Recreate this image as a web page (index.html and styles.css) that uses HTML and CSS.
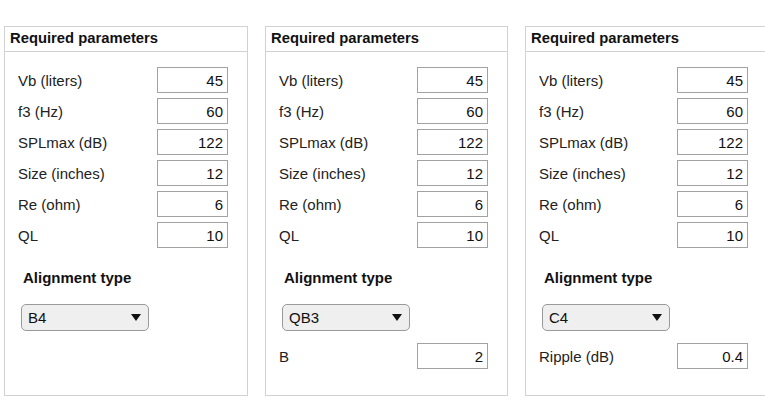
FILE: index.html
```html
<!DOCTYPE html>
<html lang="en">
<head>
    <meta charset="UTF-8">
    <meta name="viewport" content="width=device-width, initial-scale=1.0">
    <title>Box Designer</title>
    <link rel="stylesheet" href="styles.css">
</head>
<body>
    <div class="panels">
        <div class="panel">
            <div class="panel-title">Required parameters</div>
            <div class="panel-body">
                <div class="row"><span>Vb (liters)</span><input type="text" value="45"></div>
                <div class="row"><span>f3 (Hz)</span><input type="text" value="60"></div>
                <div class="row"><span>SPLmax (dB)</span><input type="text" value="122"></div>
                <div class="row"><span>Size (inches)</span><input type="text" value="12"></div>
                <div class="row"><span>Re (ohm)</span><input type="text" value="6"></div>
                <div class="row"><span>QL</span><input type="text" value="10"></div>
                <h4>Alignment type</h4>
                <div class="dropdown"><span>B4</span><span class="arrow"></span></div>
            </div>
        </div>

        <div class="panel">
            <div class="panel-title">Required parameters</div>
            <div class="panel-body">
                <div class="row"><span>Vb (liters)</span><input type="text" value="45"></div>
                <div class="row"><span>f3 (Hz)</span><input type="text" value="60"></div>
                <div class="row"><span>SPLmax (dB)</span><input type="text" value="122"></div>
                <div class="row"><span>Size (inches)</span><input type="text" value="12"></div>
                <div class="row"><span>Re (ohm)</span><input type="text" value="6"></div>
                <div class="row"><span>QL</span><input type="text" value="10"></div>
                <h4>Alignment type</h4>
                <div class="dropdown"><span>QB3</span><span class="arrow"></span></div>
                <div class="row extra"><span>B</span><input type="text" value="2"></div>
            </div>
        </div>

        <div class="panel">
            <div class="panel-title">Required parameters</div>
            <div class="panel-body">
                <div class="row"><span>Vb (liters)</span><input type="text" value="45"></div>
                <div class="row"><span>f3 (Hz)</span><input type="text" value="60"></div>
                <div class="row"><span>SPLmax (dB)</span><input type="text" value="122"></div>
                <div class="row"><span>Size (inches)</span><input type="text" value="12"></div>
                <div class="row"><span>Re (ohm)</span><input type="text" value="6"></div>
                <div class="row"><span>QL</span><input type="text" value="10"></div>
                <h4>Alignment type</h4>
                <div class="dropdown"><span>C4</span><span class="arrow"></span></div>
                <div class="row extra"><span>Ripple (dB)</span><input type="text" value="0.4"></div>
            </div>
        </div>
    </div>
</body>
</html>
```

FILE: styles.css
```css
* {
    padding: 0;
    margin: 0;
    box-sizing: border-box;
    font-family: "Liberation Sans", Arial, sans-serif;
}
body {
    background: white;
    color: #222;
    overflow: hidden;
}
.panels {
    display: flex;
    gap: 17px;
    padding: 26px 0 0 4px;
    width: 800px;
}
.panel {
    flex: none;
    width: 243px;
    height: 370px;
    border: 1px solid #d2d2d2;
}
.panel:first-child {
    width: 244px;
}
.panel-title {
    height: 25px;
    line-height: 23px;
    padding-left: 5px;
    font-size: 14.8px;
    font-weight: bold;
    color: #111;
    border-bottom: 1px solid #d2d2d2;
}
.panel-body {
    display: flex;
    flex-direction: column;
    gap: 5px;
    padding: 15px 19px 0 13px;
}
.row {
    display: flex;
    align-items: center;
    justify-content: space-between;
    font-size: 15px;
}
input {
    width: 71px;
    height: 26px;
    border: 1px solid #a2a2a2;
    padding-right: 4px;
    text-align: right;
    font-size: 15px;
    color: #111;
    outline: none;
}
h4 {
    margin: 16px 0 12px 5px;
    font-size: 15px;
    line-height: 18px;
    color: #111;
}
.dropdown {
    display: flex;
    align-items: center;
    justify-content: space-between;
    width: 128px;
    height: 27px;
    margin-left: 3px;
    padding: 0 7px 0 6px;
    border: 1px solid #9a9a9a;
    border-radius: 5px;
    background: #efefef;
    font-size: 15px;
    color: #111;
}
.arrow {
    width: 0;
    height: 0;
    border-left: 5px solid transparent;
    border-right: 5px solid transparent;
    border-top: 7px solid #111;
}
.row.extra {
    margin-top: 7px;
}
```
